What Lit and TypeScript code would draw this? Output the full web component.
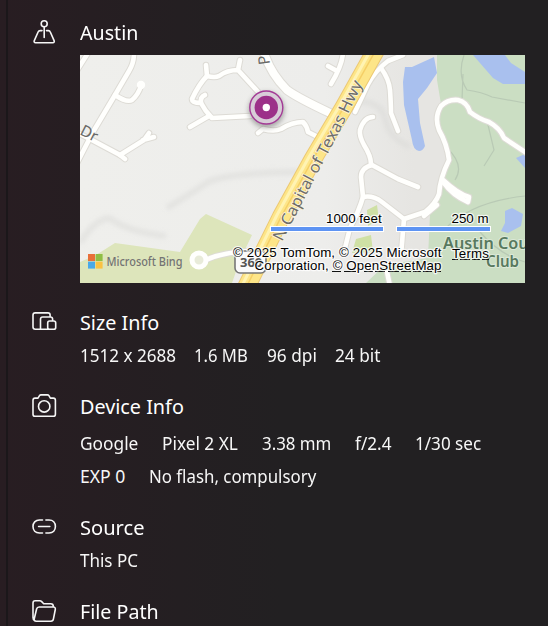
import { LitElement, html, css, svg } from "lit";
import { customElement, property, query } from "lit/decorators.js";

/** Single-line label that is condensed to the advance width given in pixels. */
@customElement("fit-text")
class FitText extends LitElement {
  @property() text = "";
  @property({ type: Number }) width = 0;
  @query("span") span!: HTMLSpanElement;

  static styles = css`
    :host { display: block; flex: none; white-space: nowrap; }
    span { display: inline-block; transform-origin: 0 50%; }
  `;

  updated() {
    this.style.width = `${this.width}px`;
    const natural = this.span.offsetWidth;
    if (natural) this.span.style.transform = `scaleX(${this.width / natural})`;
  }

  render() {
    return html`<span>${this.text}</span>`;
  }
}

const roads = [
  "M76 72L88 53",
  "M134 53Q134 63 129 71L115 95L93 132L76 165",
  "M115 95Q127 103 132 100Q138 95 141 86",
  "M76 132L90 139L120 155L125 159",
  "M120 155L144 140L149 133M143 140L154 137",
  "M206 65L207 76Q215 78 219 76Q227 70 238 70L240 60M238 70L260 94",
  "M207 76Q199 84 192 99Q192 103 201 103Q205 111 212 118L250 116",
  "M201 103Q200 97 205 95M209 116L190 127",
  "M258 133L263 129Q274 132 281 129Q292 122 303 122Q307 126 308 132L320 138",
  "M343 53Q342 66 331 84M328 66L337 71",
  "M355 112L368 84Q376 70 388 61L403 55",
  "M381 68Q389 79 390 90Q391 105 391 113L398 131",
  "M373 117Q364 117 360 130Q359 136 364 145Q371 156 371 164",
  "M418 187L398 179L372 165Q361 168 361 177L363 197Q359 211 350 228L345 248",
  "M363 197Q373 195 382 202L404 219L401 255M387 272L390 286",
  "M404 219L425 212Q436 203 439 194Q440 178 449 160Q447 144 439 130Q434 117 441 106Q448 99 458 100Q467 102 470 112Q479 119 489 122Q500 128 504 138L528 154",
  "M443 182Q453 196 468 202L469 197Q458 194 443 180M424 216L437 205",
  "M206 260Q220 253 248 251",
];

const wideRoad = "M264 53Q271 74 287 90Q298 98 330 113";
const highway = "M377 48L344 107L313 159L281 217L242 296";

const reliefs = [
  "M80 243Q94 220 109 218Q128 232 166 236",
  "M167 208Q192 193 208 182Q228 173 298 172",
  "M355 102Q382 99 386 122Q390 138 410 147",
];

const icons = {
  pin: svg`<circle cx="12.2" cy="3.7" r="3"/><path d="M12.2 6.7V17.5M10 10.6H8.2Q6.7 10.6 6.1 12L2.3 20.6Q1.6 22.7 3.6 22.7H20.8Q22.8 22.7 22.1 20.6L18.3 12Q17.8 10.6 16.3 10.6H14.5"/>`,
  size: svg`<path d="M8.5 19.3H3.2Q1 19.3 1 17.1V5.1Q1 2.9 3.2 2.9H15.9Q18.1 2.9 18.1 5.1V7M8.5 19.3V9.2Q8.5 7 10.7 7H18.4Q20.6 7 20.6 9.2V11M8.5 19.3H16M17.6 11H21.8Q23.7 11 23.7 12.9V17.4Q23.7 19.3 21.8 19.3H17.6Q15.7 19.3 15.7 17.4V12.9Q15.7 11 17.6 11Z"/>`,
  camera: svg`<path d="M3.1 4.1H6L7.5 1.7Q8 .9 9 .9H15.4Q16.4 .9 16.9 1.7L18.4 4.1H21.3Q23.4 4.1 23.4 6.2V20.2Q23.4 22.3 21.3 22.3H3.1Q1 22.3 1 20.2V6.2Q1 4.1 3.1 4.1Z"/><circle cx="12.2" cy="12.4" r="5.7"/>`,
  link: svg`<path d="M10.5 5H7.4C3.4 5 1 7.8 1 11.5S3.4 18 7.4 18H10.5M13.9 5H17C21 5 23.4 7.8 23.4 11.5S21 18 17 18H13.9M6.6 11.5H17.8"/>`,
  folder: svg`<path d="M2.3 21.2Q1 20.5 1 18.6V4Q1 1.8 3.2 1.8H7.8Q8.9 1.8 9.7 2.6L11.7 4.7H18.8Q21.3 4.7 21.3 7.3V8M4.2 22.2H18.9Q21 22.2 21.4 20.2L23.3 10.5Q23.6 8 21.3 8H7.2Q5.1 8 4.6 10L2.2 20Q1.9 22.2 4.2 22.2Z"/>`,
};

@customElement("location-map")
class LocationMap extends LitElement {
  static styles = css`
    :host { display: block; }
    svg { display: block; width: 445px; height: 228px; }
    .line { fill: none; stroke-linecap: round; stroke-linejoin: round; }
    .casing { stroke: #dddbd5; stroke-width: 6.6; }
    .road { stroke: #fffffd; stroke-width: 4.6; }
    .relief { fill: none; stroke: #d8d8d6; stroke-width: 5; filter: url(#soft); opacity: .6; }
    .meadow { fill: #dde5bb; }
    .park { fill: #cfe0a5; }
    .golf { fill: #cbdec3; }
    .water { fill: #a9c0ee; }
    .trail { fill: none; stroke: #b9cab5; stroke-width: 1.2; }
    .place { font: 600 16px "Noto Sans", sans-serif; fill: #58795f; stroke: #dce9d8; stroke-width: 2; paint-order: stroke; }
    .street { font: 400 16px "Noto Sans", sans-serif; fill: #6e6d69; stroke: #faf3dc; stroke-width: 1.6; paint-order: stroke; }
    .small { font: 15.5px "Noto Sans", sans-serif; fill: #696966; }
    .shield { font: bold 13px "Noto Sans", sans-serif; fill: #555; }
    .brand { font: 500 12.8px "Noto Sans", sans-serif; fill: #737373; }
    .legal { font: 13.33px "Liberation Sans", Arial, sans-serif; fill: #000; stroke: #fff; stroke-opacity: .8; stroke-width: 2.4; stroke-linejoin: round; paint-order: stroke; }
    .scale { fill: #5e94f3; stroke: #fff; stroke-width: 1; }
    .under { stroke: #111; stroke-width: 1; }
  `;

  render() {
    return html`<svg viewBox="80 55 445 228">
      <defs>
        <filter id="soft" x="-20%" y="-40%" width="140%" height="180%"><feGaussianBlur stdDeviation="2.6"/></filter>
        <linearGradient id="land"><stop offset="0" stop-color="#efefec"/><stop offset=".55" stop-color="#ededeb"/><stop offset=".75" stop-color="#e6e5e2"/></linearGradient>
        <path id="hwy" d="M282 242L313 182L342 127L363 83"/>
      </defs>
      <rect x="80" y="55" width="445" height="228" fill="url(#land)"/>
      ${reliefs.map((d) => svg`<path class="relief" d=${d}/>`)}
      <path class="meadow" d="M80 262L96 255L115 243L180 252L200 219L206 214L252 235L240 260L232 283H80Z"/>
      <path class="park" d="M367 210L377 205L379 220L368 226ZM356 239L371 235L373 252L352 253Z"/>
      <path class="golf" d="M437 55H525V283H366L385 265L428 258L430 214L440 195L449 160L437 122L441 104L437 80Z"/>
      <path class="trail" d="M464 55Q457 75 467 90Q482 92 492 97L525 103M462 100L463 74M447 148Q465 165 455 180M488 125L494 150L484 166M444 230Q470 202 525 196M480 232Q500 255 525 262"/>
      <path class="water" d="M405 67L412 67L434 57L437 73L427 88L418 99L420 123L425 146Q423 151 419 151Q413 150 412 140L404 105L403 82ZM473 55L493 78L503 84L525 84V72L511 63L505 55ZM516 158L525 154V168ZM505 211L512 208L523 214L521 226L508 233L501 231L505 223Z"/>
      ${roads.map((d) => svg`<path class="line casing" d=${d}/>`)}
      <path class="line" stroke="#dedcd6" stroke-width="10" d=${wideRoad}/>
      ${roads.map((d) => svg`<path class="line road" d=${d}/>`)}
      <path class="line" stroke="#fffffd" stroke-width="8" d=${wideRoad}/>
      <circle cx="141" cy="85" r="4.2" fill="#fffffd"/>
      <circle cx="199" cy="260" r="7" fill="#e8ebd9" stroke="#fffffd" stroke-width="5"/>
      <path class="line" stroke="#ecc873" stroke-width="18.5" d=${highway}/>
      <path class="line" stroke="#fde588" stroke-width="16.5" d=${highway}/>
      <path class="line" stroke="#fff3b3" stroke-width="3" transform="translate(-4 -2)" d=${highway}/>
      <path class="line" stroke="#f5cf67" stroke-width="1.5" d=${highway}/>
      <text class="street"><textPath href="#hwy" textLength="178" lengthAdjust="spacingAndGlyphs">N Capital of Texas Hwy</textPath></text>
      <text class="small" transform="translate(79 134) rotate(27)">Dr</text>
      <text class="small" transform="translate(270 64) rotate(-98)">P</text>
      <text class="place" x="443" y="249" textLength="96" lengthAdjust="spacingAndGlyphs">Austin Coun</text>
      <text class="place" x="486" y="267" textLength="33" lengthAdjust="spacingAndGlyphs">Club</text>
      <rect x="235" y="251" width="31" height="22" rx="5" fill="#fafafa" stroke="#777" stroke-width="1.6"/>
      <text class="shield" x="240" y="267">360</text>

      <circle cx="266.5" cy="110" r="18" fill="#444" opacity=".4" filter="url(#soft)"/>
      <circle cx="266.3" cy="107.5" r="16.5" fill="#d8cdd8" stroke="#a43b96" stroke-width="1.4"/>
      <circle cx="266.3" cy="107.5" r="11.7" fill="#9c3189"/>
      <circle cx="266.3" cy="107.5" r="3.7" fill="#fff"/>

      <rect x="88" y="254" width="7" height="7" fill="#e8703a"/><rect x="95.6" y="254" width="7" height="7" fill="#8fbe45"/>
      <rect x="88" y="261.6" width="7" height="7" fill="#4ba9e8"/><rect x="95.6" y="261.6" width="7" height="7" fill="#fac243"/>
      <text class="brand" x="106.5" y="266" textLength="76" lengthAdjust="spacingAndGlyphs">Microsoft Bing</text>

      <text class="legal" x="326" y="223">1000 feet</text>
      <text class="legal" x="451.5" y="223">250 m</text>
      <rect class="scale" x="270.5" y="226.5" width="113" height="5"/>
      <rect class="scale" x="396.5" y="226.5" width="94" height="5"/>
      <text class="legal" x="233" y="257" textLength="208.5">© 2025 TomTom, © 2025 Microsoft</text>
      <path class="under" d="M332 271.5H341M344 271.5H356M364 271.5H373M375 271.5H385M388 271.5H399M401 271.5H411M413 271.5H421M423 271.5H432M437 271.5H441M452 259.5H458M460 259.5H470M472 259.5H480M482 259.5H489"/>
      <text class="legal" x="254.5" y="270" textLength="187">Corporation, © OpenStreetMap</text>
      <text class="legal" x="452" y="258" textLength="37">Terms</text>
    </svg>`;
  }
}

type Item = [string, number];
interface Section { icon: keyof typeof icons; title: Item; kind: string; rows: Item[][]; }

const sections: Section[] = [
  { icon: "pin", title: ["Austin", 58.5], kind: "map", rows: [] },
  { icon: "size", title: ["Size Info", 79], kind: "size", rows: [[["1512 x 2688", 96], ["1.6 MB", 54], ["96 dpi", 50], ["24 bit", 45]]] },
  { icon: "camera", title: ["Device Info", 104], kind: "device", rows: [[["Google", 58], ["Pixel 2 XL", 75.5], ["3.38 mm", 69], ["f/2.4", 36], ["1/30 sec", 66]], [["EXP 0", 45], ["No flash, compulsory", 167.5]]] },
  { icon: "link", title: ["Source", 64], kind: "source", rows: [[["This PC", 58]]] },
  { icon: "folder", title: ["File Path", 78.5], kind: "path", rows: [] },
];

@customElement("app-root")
class AppRoot extends LitElement {
  static styles = css`
    :host {
      display: block; box-sizing: border-box; width: 548px; height: 626px; overflow: hidden;
      padding-left: 6px; color: #fff; font-family: "Noto Sans", "Open Sans", sans-serif;
      background: linear-gradient(90deg, #281d22 0, #241f22 180px, #222022 280px, #222022);
    }
    .panel {
      display: flex; flex-direction: column; gap: 24px; box-sizing: border-box; height: 626px;
      padding: 18px 0 0 24px; border-left: 2px solid #1b171a;
    }
    .section { flex: none; }
    .head { display: flex; align-items: center; height: 28px; }
    .glyph { width: 25px; height: 25px; margin-right: 23px; flex: none; overflow: visible; fill: none; stroke: #f6f6f6; stroke-width: 1.6; stroke-linejoin: round; stroke-linecap: round; }
    .title { font-size: 19.8px; line-height: 28px; padding-top: 2px; }
    .body { display: flex; flex-direction: column; gap: 9px; margin: 7px 0 1px 48px; }
    .device { margin-top: 11px; }
    .map { margin: 9px 0 1px 48px; }
    .row { display: flex; gap: 18.4px; height: 24px; font-size: 17.6px; line-height: 24px; color: #f7f7f7; }
    .device .row { gap: 24px; }
  `;

  private content(s: Section) {
    if (s.kind === "map") return html`<location-map class="map"></location-map>`;
    if (!s.rows.length) return null;
    return html`<div class="body ${s.kind}">
      ${s.rows.map((row) => html`<div class="row">${row.map(([t, w]) => html`<fit-text .text=${t} .width=${w}></fit-text>`)}</div>`)}
    </div>`;
  }

  render() {
    return html`<main class="panel">
      ${sections.map((s) => html`<section class="section">
        <div class="head">
          <svg class="glyph" viewBox="0 0 25 25">${icons[s.icon]}</svg>
          <fit-text class="title" .text=${s.title[0]} .width=${s.title[1]}></fit-text>
        </div>
        ${this.content(s)}
      </section>`)}
    </main>`;
  }
}
